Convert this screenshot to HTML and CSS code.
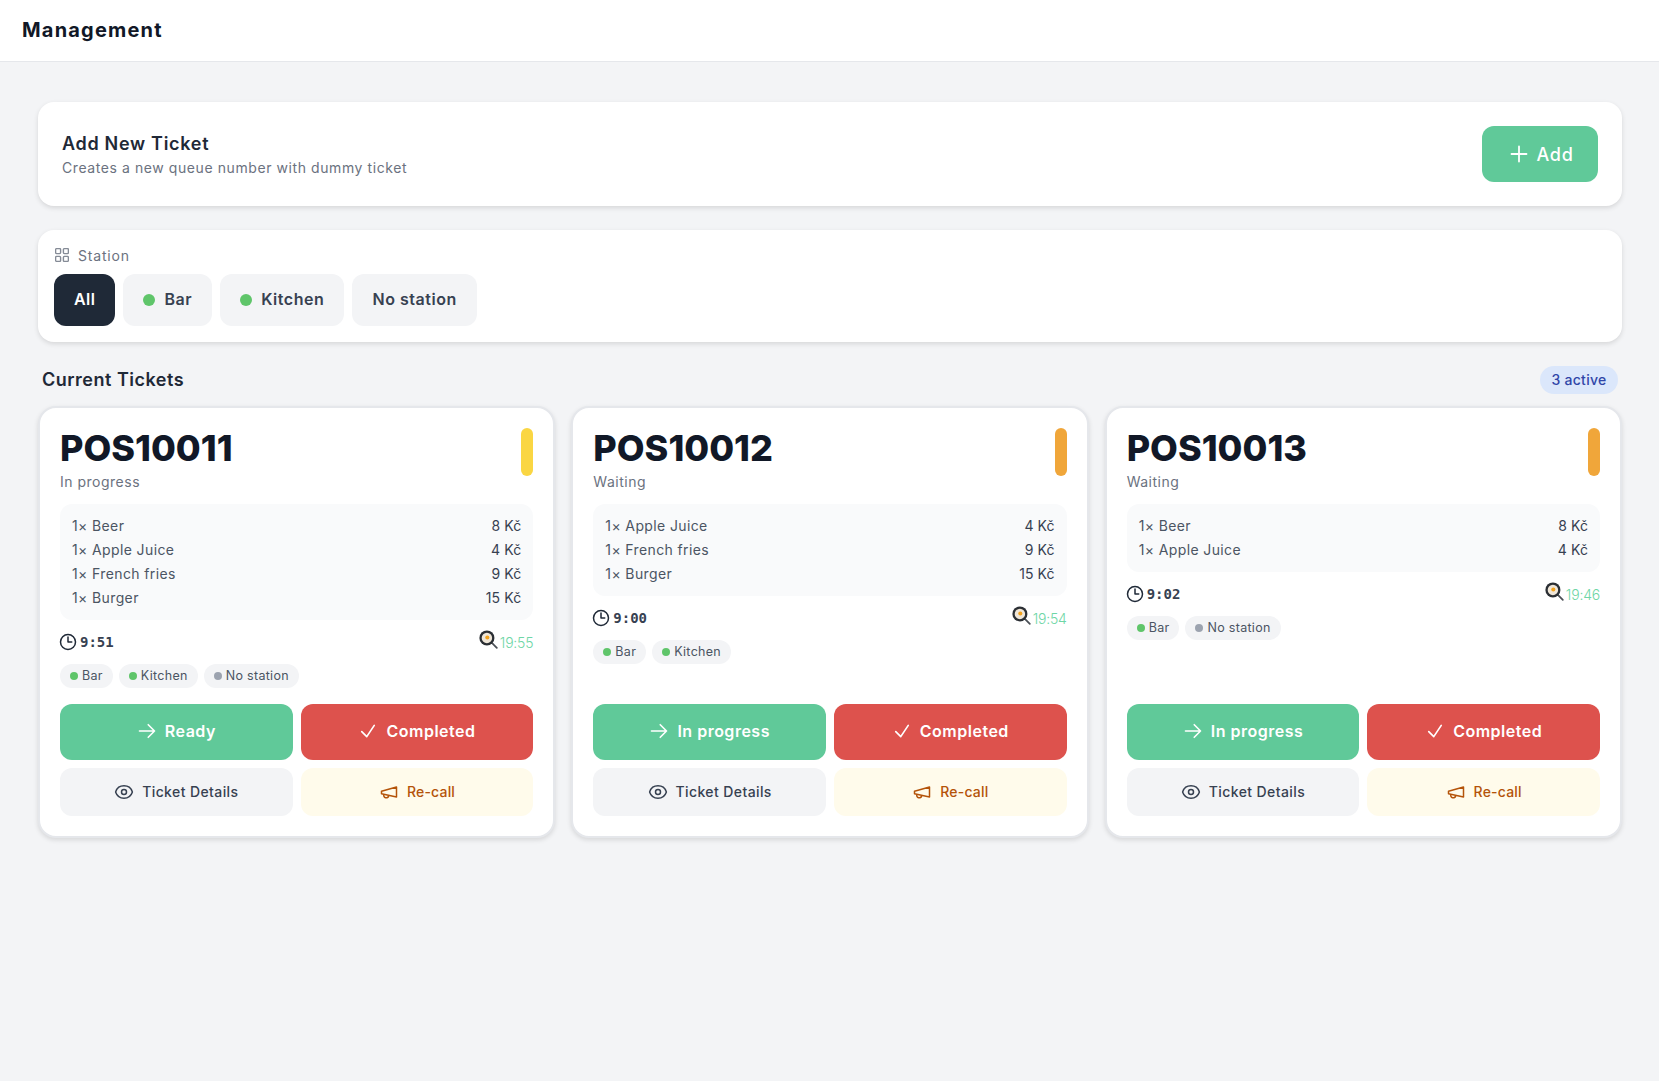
FILE: index.html
```html
<!DOCTYPE html>
<html lang="en">
<head>
    <meta charset="UTF-8">
    <title>Management</title>
    <link rel="stylesheet" href="styles.css">
</head>
<body>
    <svg class="sprite" xmlns="http://www.w3.org/2000/svg">
        <symbol id="i-plus" viewBox="0 0 24 24"><path d="M12 4.5v15m7.5-7.5h-15"/></symbol>
        <symbol id="i-arrow" viewBox="0 0 24 24"><path d="M13.5 4.5 21 12m0 0-7.5 7.5M21 12H3"/></symbol>
        <symbol id="i-check" viewBox="0 0 24 24"><path d="m4.5 12.75 6 6 9-13.5"/></symbol>
        <symbol id="i-eye" viewBox="0 0 24 24"><path d="M2.036 12.322a1.012 1.012 0 0 1 0-.639C3.423 7.51 7.36 4.5 12 4.5c4.638 0 8.573 3.007 9.963 7.178.07.207.07.431 0 .639C20.577 16.49 16.64 19.5 12 19.5c-4.638 0-8.573-3.007-9.963-7.178Z"/><path d="M15 12a3 3 0 1 1-6 0 3 3 0 0 1 6 0Z"/></symbol>
        <symbol id="i-horn" viewBox="0 0 24 24"><path d="m3 11 18-5v12L3 14v-3z"/><path d="M11.6 16.8a3 3 0 1 1-5.8-1.6"/></symbol>
        <symbol id="i-clock" viewBox="0 0 24 24"><path d="M12 6v6h4.5m4.5 0a9 9 0 1 1-18 0 9 9 0 0 1 18 0Z"/></symbol>
        <symbol id="i-pan" viewBox="0 0 24 24">
            <path class="pan-handle" d="M15 15l7.5 7.5"/>
            <circle class="pan-body" cx="10" cy="10" r="9.5"/>
            <circle class="pan-egg" cx="10" cy="10" r="6.6"/>
            <circle class="pan-yolk" cx="10.5" cy="9.5" r="2.6"/>
        </symbol>
    </svg>

    <header class="topbar">
        <h1>Management</h1>
    </header>

    <main class="content">
        <section class="panel addPanel">
            <div>
                <h2>Add New Ticket</h2>
                <p>Creates a new queue number with dummy ticket</p>
            </div>
            <button type="button" class="addBtn"><svg class="icon"><use href="#i-plus"/></svg>Add</button>
        </section>

        <section class="panel stationPanel">
            <div class="stationLabel">
                <svg class="gridIcon" viewBox="0 0 14 14"><rect x="0.6" y="0.6" width="5" height="5" rx="1"/><rect x="8.4" y="0.6" width="5" height="5" rx="1"/><rect x="0.6" y="8.4" width="5" height="5" rx="1"/><rect x="8.4" y="8.4" width="5" height="5" rx="1"/></svg>
                Station
            </div>
            <div class="pills">
                <button type="button" class="pill active">All</button>
                <button type="button" class="pill"><span class="dot bigDot"></span>Bar</button>
                <button type="button" class="pill"><span class="dot bigDot"></span>Kitchen</button>
                <button type="button" class="pill">No station</button>
            </div>
        </section>

        <div class="ticketsHead">
            <h2>Current Tickets</h2>
            <span class="badge">3 active</span>
        </div>

        <div class="tickets">
            <article class="ticket">
                <div class="ticketTop">
                    <div>
                        <div class="number">POS10011</div>
                        <div class="status">In progress</div>
                    </div>
                    <span class="bar yellow"></span>
                </div>
                <ul class="items">
                    <li><span>1× Beer</span><span class="price">8 Kč</span></li>
                    <li><span>1× Apple Juice</span><span class="price">4 Kč</span></li>
                    <li><span>1× French fries</span><span class="price">9 Kč</span></li>
                    <li><span>1× Burger</span><span class="price">15 Kč</span></li>
                </ul>
                <div class="times">
                    <span class="elapsed"><svg class="icon"><use href="#i-clock"/></svg>9:51</span>
                    <span class="eta"><svg class="pan"><use href="#i-pan"/></svg>19:55</span>
                </div>
                <div class="tags">
                    <span class="tag"><span class="dot"></span>Bar</span>
                    <span class="tag"><span class="dot"></span>Kitchen</span>
                    <span class="tag"><span class="dot grey"></span>No station</span>
                </div>
                <div class="actions">
                    <button type="button" class="btn green"><svg class="icon"><use href="#i-arrow"/></svg>Ready</button>
                    <button type="button" class="btn red"><svg class="icon"><use href="#i-check"/></svg>Completed</button>
                    <button type="button" class="btn small light"><svg class="icon"><use href="#i-eye"/></svg>Ticket Details</button>
                    <button type="button" class="btn small recall"><svg class="icon"><use href="#i-horn"/></svg>Re-call</button>
                </div>
            </article>

            <article class="ticket">
                <div class="ticketTop">
                    <div>
                        <div class="number">POS10012</div>
                        <div class="status">Waiting</div>
                    </div>
                    <span class="bar orange"></span>
                </div>
                <ul class="items">
                    <li><span>1× Apple Juice</span><span class="price">4 Kč</span></li>
                    <li><span>1× French fries</span><span class="price">9 Kč</span></li>
                    <li><span>1× Burger</span><span class="price">15 Kč</span></li>
                </ul>
                <div class="times">
                    <span class="elapsed"><svg class="icon"><use href="#i-clock"/></svg>9:00</span>
                    <span class="eta"><svg class="pan"><use href="#i-pan"/></svg>19:54</span>
                </div>
                <div class="tags">
                    <span class="tag"><span class="dot"></span>Bar</span>
                    <span class="tag"><span class="dot"></span>Kitchen</span>
                </div>
                <div class="actions">
                    <button type="button" class="btn green"><svg class="icon"><use href="#i-arrow"/></svg>In progress</button>
                    <button type="button" class="btn red"><svg class="icon"><use href="#i-check"/></svg>Completed</button>
                    <button type="button" class="btn small light"><svg class="icon"><use href="#i-eye"/></svg>Ticket Details</button>
                    <button type="button" class="btn small recall"><svg class="icon"><use href="#i-horn"/></svg>Re-call</button>
                </div>
            </article>

            <article class="ticket">
                <div class="ticketTop">
                    <div>
                        <div class="number">POS10013</div>
                        <div class="status">Waiting</div>
                    </div>
                    <span class="bar orange"></span>
                </div>
                <ul class="items">
                    <li><span>1× Beer</span><span class="price">8 Kč</span></li>
                    <li><span>1× Apple Juice</span><span class="price">4 Kč</span></li>
                </ul>
                <div class="times">
                    <span class="elapsed"><svg class="icon"><use href="#i-clock"/></svg>9:02</span>
                    <span class="eta"><svg class="pan"><use href="#i-pan"/></svg>19:46</span>
                </div>
                <div class="tags">
                    <span class="tag"><span class="dot"></span>Bar</span>
                    <span class="tag"><span class="dot grey"></span>No station</span>
                </div>
                <div class="actions">
                    <button type="button" class="btn green"><svg class="icon"><use href="#i-arrow"/></svg>In progress</button>
                    <button type="button" class="btn red"><svg class="icon"><use href="#i-check"/></svg>Completed</button>
                    <button type="button" class="btn small light"><svg class="icon"><use href="#i-eye"/></svg>Ticket Details</button>
                    <button type="button" class="btn small recall"><svg class="icon"><use href="#i-horn"/></svg>Re-call</button>
                </div>
            </article>
        </div>
    </main>
</body>
</html>
```

FILE: styles.css
```css
*{
    box-sizing: border-box;
}
body{
    margin: 0;
    min-height: 1081px;
    background: #f3f4f6;
    font-family: "Inter", "Noto Sans", sans-serif;
    color: #111827;
}
h1,h2,p,ul{
    margin: 0;
    padding: 0;
}
button{
    border: none;
    font-family: inherit;
    cursor: pointer;
}
.sprite{
    display: none;
}
.icon{
    fill: none;
    stroke: currentColor;
    stroke-width: 1.8;
    stroke-linecap: round;
    stroke-linejoin: round;
    flex: none;
}
.topbar{
    height: 62px;
    padding: 0 22px 2px;
    display: flex;
    align-items: center;
    background: #fff;
    border-bottom: 1px solid #e5e7eb;
}
.topbar h1{
    font-size: 20px;
    font-weight: 700;
    letter-spacing: 1.2px;
}
.content{
    padding: 40px 37px 0 38px;
}
.panel{
    background: #fff;
    border-radius: 16px;
    box-shadow: 0 2px 5px rgba(0,0,0,.12);
}
.addPanel{
    height: 104px;
    padding: 0 24px;
    display: flex;
    align-items: center;
    justify-content: space-between;
}
.addPanel h2{
    font-size: 18px;
    font-weight: 600;
    line-height: 26px;
    color: #1f2937;
    letter-spacing: 0.7px;
}
.addPanel p{
    font-size: 14px;
    line-height: 20px;
    margin-top: 1px;
    color: #6b7280;
    letter-spacing: 0.58px;
}
.addBtn{
    width: 116px;
    height: 56px;
    display: flex;
    align-items: center;
    justify-content: center;
    gap: 6px;
    border-radius: 12px;
    background: #60c999;
    color: #fff;
    font-size: 18px;
    font-weight: 500;
    letter-spacing: 0.7px;
}
.addBtn .icon{
    width: 24px;
    height: 24px;
}
.stationPanel{
    height: 112px;
    margin-top: 24px;
    padding: 15px 16px 16px;
}
.stationLabel{
    height: 20px;
    display: flex;
    align-items: center;
    gap: 9px;
    font-size: 14px;
    color: #6b7280;
    letter-spacing: 0.8px;
}
.gridIcon{
    width: 14px;
    height: 14px;
    margin-left: 1px;
    fill: none;
    stroke: #858b96;
    stroke-width: 1.4;
}
.pills{
    display: flex;
    gap: 8px;
    margin-top: 9px;
}
.pill{
    height: 52px;
    padding: 0 20px 2px;
    display: flex;
    align-items: center;
    gap: 9px;
    border-radius: 12px;
    background: #f3f4f6;
    color: #374151;
    font-size: 16px;
    font-weight: 600;
    letter-spacing: 0.55px;
}
.pill.active{
    background: #1f2937;
    color: #fff;
    letter-spacing: 0.45px;
}
.dot{
    width: 8px;
    height: 8px;
    border-radius: 50%;
    background: #5fc56a;
    flex: none;
}
.dot.grey{
    background: #9ca3af;
}
.bigDot{
    width: 12px;
    height: 12px;
    margin-top: 2px;
}
.ticketsHead{
    height: 28px;
    margin-top: 24px;
    padding: 0 4px;
    display: flex;
    align-items: center;
    justify-content: space-between;
}
.ticketsHead h2{
    font-size: 18px;
    font-weight: 600;
    padding-bottom: 2px;
    color: #1f2937;
    letter-spacing: 0.5px;
}
.badge{
    width: 78px;
    height: 28px;
    padding-bottom: 2px;
    display: flex;
    align-items: center;
    justify-content: center;
    border-radius: 14px;
    background: #dbe7fb;
    color: #3046a8;
    font-size: 14px;
    font-weight: 500;
    letter-spacing: 0.3px;
}
.tickets{
    display: grid;
    grid-template-columns: repeat(3, 1fr);
    gap: 16px;
    margin-top: 12px;
}
.ticket{
    display: flex;
    flex-direction: column;
    padding: 20px;
    background: #fff;
    border: 2px solid #e5e7eb;
    border-radius: 18px;
    box-shadow: 0 2px 5px rgba(0,0,0,.12);
}
.ticketTop{
    display: flex;
    justify-content: space-between;
    align-items: flex-start;
}
.number{
    font-size: 36px;
    line-height: 40px;
    font-weight: 800;
    color: #111827;
}
.status{
    margin-top: 4px;
    font-size: 14px;
    line-height: 20px;
    color: #6b7280;
    letter-spacing: 0.5px;
}
.bar{
    width: 12px;
    height: 48px;
    border-radius: 6px;
}
.bar.yellow{
    background: #fad643;
}
.bar.orange{
    background: #f0a63a;
}
.items{
    margin-top: 12px;
    padding: 10px 12px;
    list-style: none;
    background: #f9fafb;
    border-radius: 12px;
}
.items li{
    height: 24px;
    padding-bottom: 2px;
    display: flex;
    align-items: center;
    justify-content: space-between;
    font-size: 14px;
    color: #4b5563;
    letter-spacing: 0.38px;
}
.price{
    color: #374151;
    letter-spacing: 0.1px;
}
.times{
    margin-top: 12px;
    height: 20px;
    display: flex;
    align-items: center;
    justify-content: space-between;
}
.elapsed{
    display: flex;
    align-items: center;
    gap: 2px;
    font-family: "DejaVu Sans Mono", monospace;
    font-size: 14px;
    font-weight: 700;
    color: #374151;
}
.elapsed .icon{
    width: 20px;
    height: 20px;
    margin-left: -2px;
    stroke: #1f2937;
}
.eta{
    display: flex;
    align-items: center;
    gap: 2px;
    font-size: 14px;
    font-weight: 300;
    color: #6ed6a6;
    letter-spacing: -0.2px;
}
.pan{
    width: 19px;
    height: 19px;
    margin-top: -6px;
}
.pan-handle{
    fill: none;
    stroke: #4a4f55;
    stroke-width: 2.2;
    stroke-linecap: round;
}
.pan-body{
    fill: #2b2f34;
}
.pan-egg{
    fill: #efe6d8;
}
.pan-yolk{
    fill: #f2a21e;
}
.tags{
    display: flex;
    gap: 6px;
    margin-top: 12px;
}
.tag{
    height: 24px;
    padding: 0 10px 2px;
    display: flex;
    align-items: center;
    gap: 4px;
    border-radius: 12px;
    background: #f3f4f6;
    color: #4b5563;
    font-size: 12.5px;
    letter-spacing: 0.3px;
}
.tag .dot{
    margin-top: 2px;
}
.actions{
    margin-top: auto;
    padding-top: 16px;
    display: grid;
    grid-template-columns: 1fr 1fr;
    gap: 8px;
}
.btn{
    height: 56px;
    padding-bottom: 3px;
    display: flex;
    align-items: center;
    justify-content: center;
    gap: 8px;
    border-radius: 12px;
    font-size: 16px;
    font-weight: 600;
    letter-spacing: 0.5px;
    color: #fff;
}
.btn .icon{
    width: 20px;
    height: 20px;
    stroke-width: 2;
}
.btn.green{
    background: #60c999;
}
.btn.red{
    background: #dd524d;
}
.btn.small{
    height: 48px;
    padding-bottom: 2px;
    font-size: 14px;
    font-weight: 500;
    letter-spacing: 0.4px;
}
.btn.small .icon{
    stroke-width: 1.8;
}
.btn.light{
    background: #f3f4f6;
    color: #374151;
}
.btn.recall{
    background: #fffbeb;
    color: #b45309;
    letter-spacing: 0.2px;
}
```
